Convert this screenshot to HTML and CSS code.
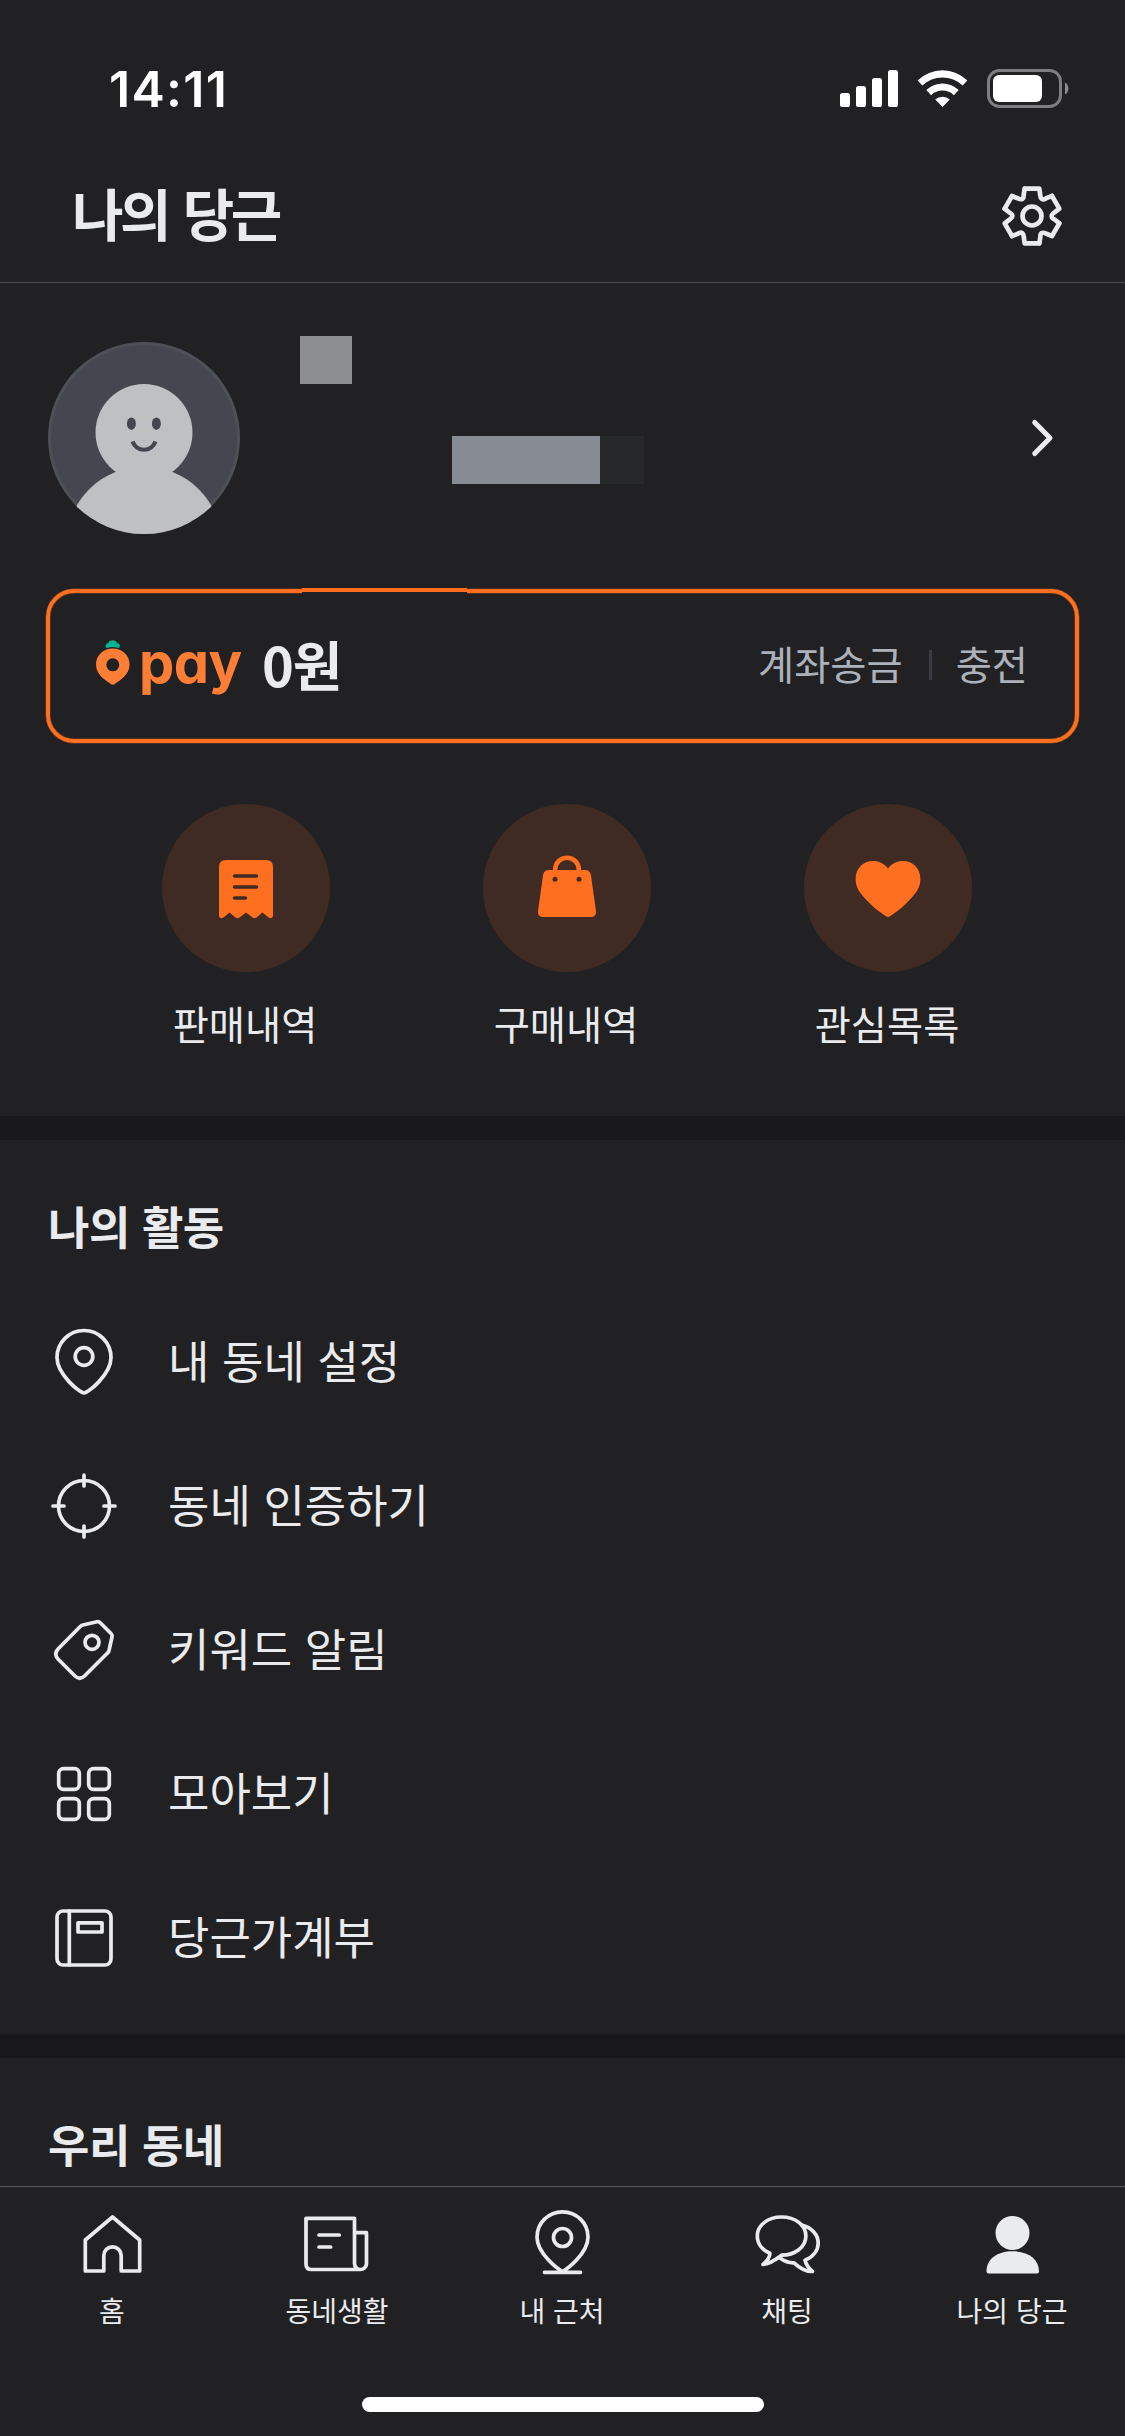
FILE: index.html
```html
<!DOCTYPE html>
<html lang="ko">
<head>
<meta charset="utf-8">
<title>나의 당근</title>
<link rel="stylesheet" href="styles.css">
</head>
<body>
<div class="screen">
  <div class="status-bar">
    <span class="time">14:11</span>
    <svg class="status-icons" viewBox="0 0 240 48" width="240" height="48">
      <g fill="#fff">
        <rect x="5" y="27" width="10" height="14" rx="2.6"/>
        <rect x="21" y="20" width="10" height="21" rx="2.6"/>
        <rect x="37" y="12" width="10" height="29" rx="2.6"/>
        <rect x="53" y="4" width="10" height="37" rx="2.6"/>
        <path d="M82.600 14.500 A35.500 35.500 0 0 1 132.400 14.500 L127.600 19.600 A29 29 0 0 0 87.400 19.600 Z"/>
        <path d="M91.300 24 A23.500 23.500 0 0 1 123.700 24 L118.900 29.200 A16.400 16.400 0 0 0 96.100 29.200 Z"/>
        <path d="M100.200 33.400 A11 11 0 0 1 114.800 33.400 L107.500 41 Z"/>
        <rect x="158" y="9" width="49" height="27" rx="6"/>
      </g>
      <rect x="153.5" y="4.5" width="72" height="36" rx="11" fill="none" stroke="#7f7f80" stroke-width="3"/>
      <path d="M230 16.5 a7 7 0 0 1 0 12 Z" fill="#8c8c8d"/>
    </svg>
  </div>

  <header class="header">
    <h1 class="header-title">나의 당근</h1>
    <svg class="gear" viewBox="-108 -108 216 216" width="72" height="72" fill="none" stroke="#eaebee" stroke-width="14" stroke-linejoin="round" stroke-linecap="round">
      <defs><path id="tooth" d="M-22 -82 L22 -82 L24.5 -64 Q26 -43 43 -53.500 L60 -60"/></defs>
      <use href="#tooth"/>
      <use href="#tooth" transform="rotate(60)"/>
      <use href="#tooth" transform="rotate(120)"/>
      <use href="#tooth" transform="rotate(180)"/>
      <use href="#tooth" transform="rotate(240)"/>
      <use href="#tooth" transform="rotate(300)"/>
      <circle r="28.500"/>
    </svg>
  </header>

  <main class="content">
    <section class="overview">
      <div class="profile">
        <svg class="avatar" viewBox="0 0 192 192" width="192" height="192">
          <defs><clipPath id="round"><circle cx="96" cy="96" r="96"/></clipPath></defs>
          <g clip-path="url(#round)">
            <rect width="192" height="192" fill="#464650"/>
            <circle cx="96" cy="96" r="94.500" fill="none" stroke="#4e5057" stroke-width="3"/>
            <circle cx="96" cy="90.500" r="48.500" fill="#bfc0c4"/>
            <circle cx="96" cy="202" r="77.500" fill="#bfc0c4"/>
            <ellipse cx="83.400" cy="81.700" rx="4.500" ry="6.200" fill="#464650"/>
            <ellipse cx="108.400" cy="81.700" rx="4.500" ry="6.200" fill="#464650"/>
            <path d="M84.500 99.500 C89 110.500 103 110.500 107.500 99.500" fill="none" stroke="#464650" stroke-width="4.200"/>
          </g>
        </svg>
        <div class="profile-info">
          <div class="mask-name"></div>
          <div class="mask-meta"><span class="mask-light"></span><span class="mask-dark"></span></div>
        </div>
        <svg class="chevron" viewBox="0 0 30 48" width="30" height="48" fill="none" stroke="#eaebee" stroke-width="5" stroke-linecap="round" stroke-linejoin="round"><path d="M9.700 8.500 L25 24 L9.700 39.500"/></svg>
      </div>

      <div class="pay-card">
        <span class="pay-notch"></span>
        <svg class="carrot" viewBox="0 0 36 48" width="36" height="48">
          <path d="M11.500 9 C8.800 9 8.800 4.500 12.500 4 C12.800 0.200 20.500 0.200 21 4 C24.800 4.500 24.800 9 22 9 Q16.800 6.800 11.500 9Z" fill="#00b493"/>
          <path fill-rule="evenodd" fill="#ff7e36" d="M16.800 9.500 C26.500 9.500 33.600 16.500 33.600 25.500 C33.600 36 23.500 41.500 18.800 45 Q16.800 46.300 14.800 45 C10 41.500 0 36 0 25.500 C0 16.500 7 9.500 16.800 9.500Z M16.800 19.300 A6.500 6.500 0 1 0 16.800 32.300 A6.500 6.500 0 1 0 16.800 19.300Z"/>
        </svg>
        <span class="pay-word">pay</span>
        <strong class="balance">0원</strong>
        <div class="pay-actions"><span>계좌송금</span><i class="pay-divider"></i><span>충전</span></div>
      </div>

      <div class="shortcuts">
        <div class="shortcut">
          <div class="shortcut-circle">
            <svg viewBox="0 0 72 72" width="72" height="72">
              <path fill="#ff6f1f" d="M16 8 H56 Q63 8 63 15 V64 Q62 67.500 58.500 65.500 L52.500 60.500 L46.500 65.500 Q44.500 67 42.500 65.500 L36 60.500 L29.500 65.500 Q27.500 67 25.500 65.500 L19.500 60.500 L13.500 65.500 Q10 67.500 9 64 V15 Q9 8 16 8Z"/>
              <path d="M24.500 24 H46.500 M24.500 35 H46.500 M24.500 46 H35.500" stroke="#3f2b24" stroke-width="3.400" stroke-linecap="round"/>
            </svg>
          </div>
          <span>판매내역</span>
        </div>
        <div class="shortcut">
          <div class="shortcut-circle">
            <svg viewBox="0 0 72 72" width="72" height="72">
              <path fill="#ff6f1f" d="M18 18 H54 Q59.300 18 60 23.500 L65 59 Q65.500 65 59.500 65 H12.500 Q6.500 65 7 59 L12 23.500 Q12.700 18 18 18Z"/>
              <path d="M24.200 19 V17.500 A11.800 11.800 0 0 1 47.800 17.500 V19" fill="none" stroke="#ff6f1f" stroke-width="4.600"/>
              <circle cx="24" cy="27.200" r="2.500" fill="#3f2b24"/><circle cx="48" cy="27.200" r="2.500" fill="#3f2b24"/>
            </svg>
          </div>
          <span>구매내역</span>
        </div>
        <div class="shortcut">
          <div class="shortcut-circle">
            <svg viewBox="0 0 72 72" width="72" height="72">
              <path fill="#ff6f1f" d="M36 16.500 C39.500 11.500 45 9 51 9 C61 9 68.400 16.500 68.400 27 C68.400 36 64 41 56.500 49 C50 56 42.500 61.500 37.500 64.500 Q36 65.400 34.500 64.500 C29.500 61.500 22 56 15.500 49 C8 41 3.600 36 3.600 27 C3.600 16.500 11 9 21 9 C27 9 32.500 11.500 36 16.500Z"/>
            </svg>
          </div>
          <span>관심목록</span>
        </div>
      </div>
    </section>

    <section class="section activity">
      <h2 class="section-title">나의 활동</h2>
      <ul class="menu">
        <li><svg class="icon" viewBox="0 0 72 72"><path d="M36 67 C32 67 9 48.500 9 31.500 A27 27 0 0 1 63 31.500 C63 48.500 40 67 36 67Z"/><circle cx="36" cy="30.500" r="8.800"/></svg><span>내 동네 설정</span></li>
        <li><svg class="icon" viewBox="0 0 72 72"><circle cx="36" cy="36" r="25.500"/><path d="M36 5 V16 M36 56 V67 M5 36 H16 M56 36 H67"/></svg><span>동네 인증하기</span></li>
        <li><svg class="icon" viewBox="0 0 72 72"><path d="M35 11 L49 7.800 Q51 7.400 52.500 9 L63 19.500 Q64.500 21 64 23 L61 36.500 Q60.700 38 59.500 39 L36.500 62 Q31.700 66.500 27 62 L10 45 Q5.500 40 10 35 L32.500 12.300 Q33.700 11.300 35 11Z"/><circle cx="44" cy="28.300" r="7"/></svg><span>키워드 알림</span></li>
        <li><svg class="icon" viewBox="0 0 72 72"><rect x="10.700" y="10.700" width="20.600" height="20.600" rx="4.800"/><rect x="40.700" y="10.700" width="20.600" height="20.600" rx="4.800"/><rect x="10.700" y="40.700" width="20.600" height="20.600" rx="4.800"/><rect x="40.700" y="40.700" width="20.600" height="20.600" rx="4.800"/></svg><span>모아보기</span></li>
        <li><svg class="icon" viewBox="0 0 72 72"><rect x="9" y="9" width="54" height="54" rx="6"/><path d="M21.300 9 V63"/><rect x="30" y="20.800" width="24" height="9.200"/></svg><span>당근가계부</span></li>
      </ul>
    </section>

    <section class="section">
      <h2 class="section-title">우리 동네</h2>
    </section>
  </main>

  <nav class="tab-bar">
    <div class="tabs">
      <div class="tab"><svg class="icon" viewBox="0 0 72 72"><path d="M35.500 9 L62.700 32 V63 H44.200 V47.500 A8.700 8.700 0 0 0 26.800 47.500 V63 H8.300 V32Z"/></svg><span>홈</span></div>
      <div class="tab"><svg class="icon" viewBox="0 0 72 72"><path d="M4 10.300 H52.500 V55.500 A6 6 0 0 0 64.500 55.500 V24.700 H52.500 M4 10.300 V56 Q4 61.500 9.500 61.500 H58.500 M17 27 H37.300 M17 39 H28.700"/></svg><span>동네생활</span></div>
      <div class="tab"><svg class="icon" viewBox="0 0 72 72"><path d="M35.500 63.500 C31 61 10 45.500 10 29 A25.500 25.200 0 0 1 61 29 C61 45.500 40 61 35.500 63.500Z M17.500 64.300 H53.500"/><circle cx="35.500" cy="29.500" r="9"/></svg><span>내 근처</span></div>
      <div class="tab"><svg class="icon" viewBox="0 0 72 72"><path d="M17.900 45.300 C10 42 5.300 35.500 5.300 28 C5.300 17 16 9 29.600 9 S53.900 17 53.900 28 S43 47.200 29.600 47.200 C24 51.500 18 56 11 56.500 C15 53 18 49 17.900 45.300Z"/><path d="M49.600 17 C60 19.500 66.200 27 66.200 35 C66.200 42.500 61 49 53 52.200 C54 57 57 60.500 60.500 63.500 C53 63.500 47 59.500 42 54.800 C36 55 32 53 28 50"/></svg><span>채팅</span></div>
      <div class="tab"><svg class="icon" viewBox="0 0 72 72"><g fill="#eaebee" stroke="none"><circle cx="35.500" cy="25" r="17"/><path d="M9.500 63.500 C9.500 51 20 43.300 35.700 43.300 S62 51 62 63.500 Q62 65.500 60 65.500 H11.500 Q9.500 65.500 9.500 63.500Z"/></g></svg><span>나의 당근</span></div>
    </div>
    <div class="home-indicator"></div>
  </nav>
</div>
</body>
</html>
```
FILE: styles.css
```css
* { box-sizing: border-box; margin: 0; padding: 0; }

body {
  background: #212123;
  color: #eaebee;
  font-family: "Noto Sans CJK KR", "Noto Sans", sans-serif;
}

.screen {
  width: 1125px;
  height: 2436px;
  display: flex;
  flex-direction: column;
  overflow: hidden;
}

svg { display: block; flex: none; }

.status-bar {
  height: 150px;
  flex: none;
  display: flex;
  justify-content: space-between;
  align-items: flex-start;
  padding: 66px 50px 0 109px;
}

.time {
  font: 600 50px/46px Inter, "Liberation Sans", sans-serif;
  color: #fff;
  letter-spacing: 1.3px;
}

.header {
  height: 133px;
  flex: none;
  display: flex;
  justify-content: space-between;
  align-items: center;
  padding: 0 57px 0 72px;
  border-bottom: 1px solid #4c4c4e;
}

.header-title {
  font-size: 56px;
  line-height: 80px;
  font-weight: 700;
  letter-spacing: -3.5px;
  word-spacing: 2.5px;
  padding-bottom: 8px;
}

.content { flex: 1; min-height: 0; overflow: hidden; }

.overview { height: 833px; padding: 53px 45px 0; }

.profile {
  height: 204px;
  display: flex;
  padding: 6px 25px 0 3px;
  justify-content: space-between;
}

.profile-info { flex: 1; padding-left: 60px; margin-top: -6px; }
.mask-name { width: 52px; height: 48px; background: #8c8d8f; }
.mask-meta { display: flex; margin: 52px 0 0 152px; }
.mask-light { width: 148px; height: 48px; background: #878b94; }
.mask-dark { width: 44px; height: 48px; background: #262829; }
.chevron { margin-top: 72px; }

.pay-card {
  position: relative;
  margin: 49px 1px 0;
  height: 154px;
  border: 4px solid #ff6f1f;
  border-radius: 28px;
  box-shadow: 0 0 0 0.5px rgba(255, 111, 31, 0.4), inset 0 0 0 0.5px rgba(255, 111, 31, 0.4);
  display: flex;
  align-items: center;
  padding: 0 47px 0 46px;
}

/* raised segment over the card's top edge */
.pay-notch {
  position: absolute;
  left: 252px;
  top: -5px;
  width: 165px;
  height: 6px;
  background: #212123;
  border-top: 4px solid #ff6f1f;
}

.carrot { margin-top: -7px; }

.pay-word {
  font: 700 56px/64px Inter, "Liberation Sans", sans-serif;
  font-feature-settings: "cv11";
  letter-spacing: -0.5px;
  color: #ff7e36;
  margin: -6px 0 0 7px;
  width: 123px;
}

.balance {
  font-size: 54px;
  line-height: 64px;
  font-weight: 700;
  letter-spacing: -1px;
  margin-top: -5px;
}

.pay-actions {
  margin: -6px 0 0 auto;
  display: flex;
  align-items: center;
  font-size: 39.3px;
  line-height: 56px;
  color: #adb1ba;
}

.pay-divider { width: 3px; height: 30px; margin: 4px 24px 0 26px; background: #393b42; }

.shortcuts { display: flex; margin-top: 61px; padding-left: 40px; }

.shortcut {
  width: 321px;
  display: flex;
  flex-direction: column;
  align-items: center;
  font-size: 39.3px;
  line-height: 56px;
}

.shortcut > span { padding-right: 1px; }

.shortcut-circle {
  width: 168px;
  height: 168px;
  border-radius: 50%;
  background: #3f2b24;
  display: flex;
  align-items: center;
  justify-content: center;
  margin-bottom: 23px;
}

.section { border-top: 24px solid #18181a; }
.activity { height: 918px; }

.section-title {
  font-size: 45px;
  line-height: 66px;
  font-weight: 700;
  letter-spacing: -0.5px;
  padding: 53px 48px 0;
}

.menu { list-style: none; padding-top: 31px; }

.menu li {
  height: 144px;
  display: flex;
  align-items: center;
  gap: 48px;
  padding: 0 48px;
  font-size: 45px;
  line-height: 66px;
}

.menu li span { padding-bottom: 4px; }

.icon {
  width: 72px;
  height: 72px;
  fill: none;
  stroke: #eaebee;
  stroke-width: 3.7;
  stroke-linecap: round;
  stroke-linejoin: round;
}

.tab-bar {
  height: 250px;
  flex: none;
  border-top: 1px solid #5c5c5e;
  background: #212123;
  display: flex;
  flex-direction: column;
  align-items: center;
}

.tabs { display: flex; width: 100%; height: 210px; padding-top: 21px; }

.tab {
  flex: 1;
  display: flex;
  flex-direction: column;
  align-items: center;
  gap: 10px;
  font-size: 28px;
  line-height: 40px;
  white-space: nowrap;
}

.tab span { padding-right: 1px; }

.home-indicator { width: 402px; height: 15px; border-radius: 8px; background: #fff; }
```
